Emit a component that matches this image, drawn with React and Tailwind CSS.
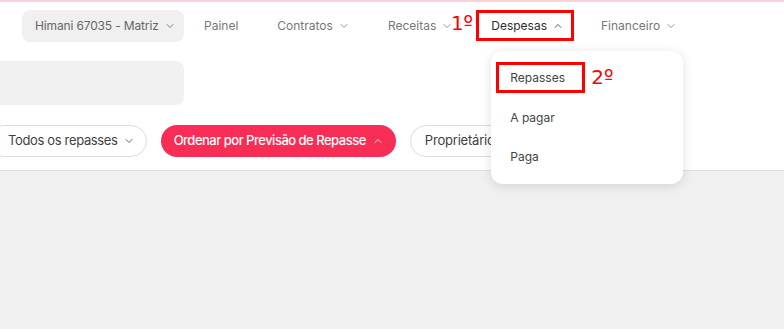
import React from "react";
import { ChevronDown, ChevronUp } from "lucide-react";

const NavItem = ({ label, open, active, className = "" }) => (
  <div
    className={`flex items-center gap-[5px] whitespace-nowrap text-[12px] ${
      active ? "text-[#2e2e2e]" : "text-[#777]"
    } ${className}`}
  >
    <span>{label}</span>
    {open === undefined ? null : open ? (
      <ChevronUp size={12} strokeWidth={1.6} />
    ) : (
      <ChevronDown size={12} strokeWidth={1.6} />
    )}
  </div>
);

const App = () => {
  return (
    <div className="w-[784px] h-[329px] overflow-hidden bg-[#f0f0f0] font-['Inter',sans-serif]">
      <div className="h-[2px] bg-[#f9d2da]" />
      <div className="bg-white border-b border-[#dedede]">
        <div className="h-[48px] flex items-center pl-[22px]">
          <div className="h-8 w-[162px] pl-[13px] rounded-lg bg-[#f0f0f0] flex items-center gap-[5px] whitespace-nowrap text-[12px] tracking-[-0.15px] text-[#666]">
            <span>Himani 67035 - Matriz</span>
            <ChevronDown size={12} strokeWidth={1.6} />
          </div>
          <NavItem label="Painel" className="ml-[20px]" />
          <NavItem label="Contratos" open={false} className="ml-[39px]" />
          <div className="relative ml-[38px]">
            <NavItem label="Receitas" open={false} />
            <span className="absolute left-[63px] -top-[4px] text-[20px] leading-none text-[#f00] font-['DejaVu_Sans',sans-serif]">
              1º
            </span>
          </div>
          <div className="relative ml-[38px]">
            <NavItem label="Despesas" open={true} active />
            <div className="absolute -left-[15px] -top-[7px] w-[98px] h-[31px] border-[3px] border-[#f00]" />
            <div className="absolute left-0 top-[34px] w-[192px] h-[133px] bg-white rounded-xl shadow-[0_2px_12px_rgba(0,0,0,0.12)] z-10 pt-[11px] px-[5px]">
              <div className="relative h-[31px] w-[89px] border-[3px] border-[#f00] flex items-center pl-[11px] text-[12px] text-[#444]">
                Repasses
                <span className="absolute left-[92px] top-[2px] text-[20px] leading-none text-[#f00] font-['DejaVu_Sans',sans-serif]">
                  2º
                </span>
              </div>
              <div className="mt-[10px] h-[30px] flex items-center pl-[14px] text-[12px] text-[#444]">
                A pagar
              </div>
              <div className="mt-[9px] h-[30px] flex items-center pl-[14px] text-[12px] text-[#444]">
                Paga
              </div>
            </div>
          </div>
          <NavItem label="Financeiro" open={false} className="ml-[37px]" />
        </div>
        <div className="mt-[11px] h-[44px] w-[184px] rounded-r-lg bg-[#f1f1f1]" />
        <div className="mt-[20px] pb-[13px] flex items-center gap-[14px] -ml-[12px]">
          <button className="h-8 pl-[19px] pr-[11px] rounded-full border border-[#dcdcdc] flex items-center gap-[5px] whitespace-nowrap text-[13px] tracking-[-0.35px] text-[#3f3f3f]">
            Todos os repasses
            <ChevronDown size={12} strokeWidth={1.6} />
          </button>
          <button className="h-8 pl-[13px] pr-[12px] rounded-full bg-[#f72d55] flex items-center gap-[6px] whitespace-nowrap text-[13px] tracking-[-0.5px] font-medium text-white">
            Ordenar por Previsão de Repasse
            <ChevronUp size={12} strokeWidth={1.8} />
          </button>
          <button className="h-8 px-[14px] rounded-full border border-[#dcdcdc] flex items-center gap-[6px] whitespace-nowrap text-[13px] tracking-[-0.2px] text-[#3f3f3f]">
            Proprietário
            <ChevronDown size={12} strokeWidth={1.6} />
          </button>
        </div>
      </div>
    </div>
  );
};

export default App;
